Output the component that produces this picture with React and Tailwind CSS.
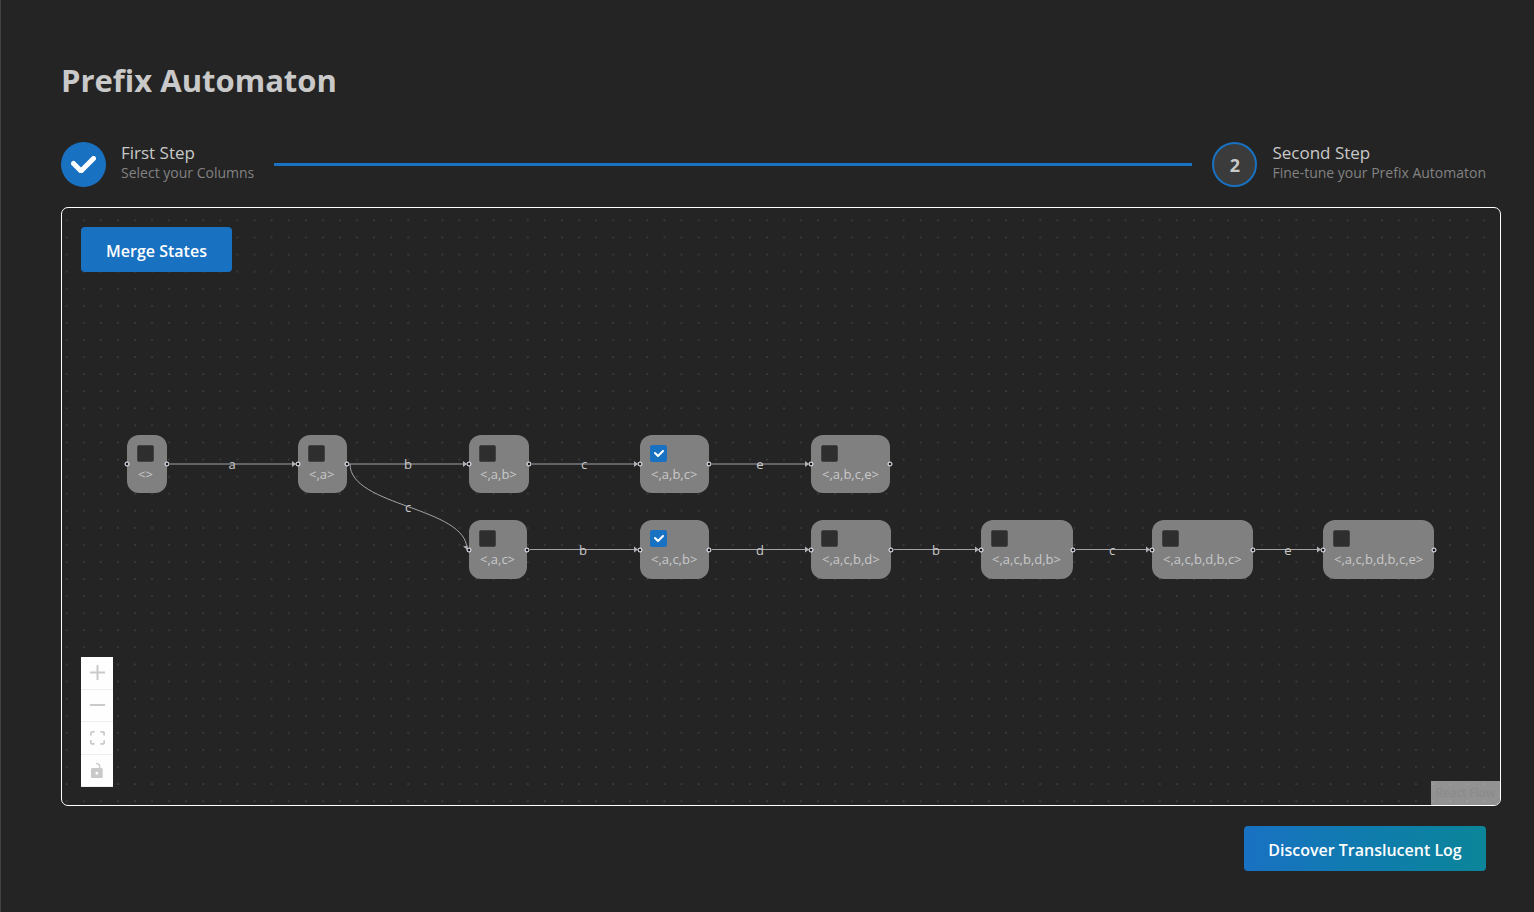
import React, { useState } from "react";

const ROW_1 = { top: 435, height: 58, mid: 464 };
const ROW_2 = { top: 520, height: 59, mid: 549.5 };
const ORIGIN = { x: 62, y: 208 };

const NODES = [
  { label: "<>", x: 127, w: 40, row: ROW_1 },
  { label: "<,a>", x: 298, w: 49, row: ROW_1 },
  { label: "<,a,b>", x: 469, w: 60, row: ROW_1 },
  { label: "<,a,b,c>", x: 640, w: 69, row: ROW_1, checked: true },
  { label: "<,a,b,c,e>", x: 811, w: 79, row: ROW_1 },
  { label: "<,a,c>", x: 469, w: 58, row: ROW_2 },
  { label: "<,a,c,b>", x: 640, w: 69, row: ROW_2, checked: true },
  { label: "<,a,c,b,d>", x: 811, w: 80, row: ROW_2 },
  { label: "<,a,c,b,d,b>", x: 981, w: 92, row: ROW_2 },
  { label: "<,a,c,b,d,b,c>", x: 1152, w: 101, row: ROW_2 },
  { label: "<,a,c,b,d,b,c,e>", x: 1323, w: 111, row: ROW_2 },
];

const EDGES = [
  { from: 0, to: 1, label: "a" },
  { from: 1, to: 2, label: "b" },
  { from: 2, to: 3, label: "c" },
  { from: 3, to: 4, label: "e" },
  { from: 1, to: 5, label: "c" },
  { from: 5, to: 6, label: "b" },
  { from: 6, to: 7, label: "d" },
  { from: 7, to: 8, label: "b" },
  { from: 8, to: 9, label: "c" },
  { from: 9, to: 10, label: "e" },
];

function geometry(edge) {
  const a = NODES[edge.from];
  const b = NODES[edge.to];
  const x1 = a.x + a.w + 3 - ORIGIN.x;
  const x2 = b.x - 3 - ORIGIN.x;
  const y1 = a.row.mid - ORIGIN.y;
  const y2 = b.row.mid - ORIGIN.y;
  return { x1, x2, y1, y2, cx: (x1 + x2) / 2, cy: (y1 + y2) / 2 };
}

function Edges() {
  return (
    <svg className="absolute inset-0 h-full w-full" aria-hidden="true">
      <defs>
        <pattern id="dots" x="-3.9" y="3.8" width="17.08" height="17.08" patternUnits="userSpaceOnUse">
          <circle cx="8.54" cy="8.54" r="0.56" fill="#81818a" />
        </pattern>
      </defs>
      <rect width="100%" height="100%" fill="url(#dots)" />
      {EDGES.map((edge) => {
        const { x1, x2, y1, y2, cy } = geometry(edge);
        const d =
          y1 === y2
            ? `M${x1} ${y1}H${x2}`
            : `M${x1} ${y1}C${x1} ${cy} ${x2 + 1} ${cy} ${x2 + 1} ${y2}`;
        return (
          <g key={`${edge.from}-${edge.to}`}>
            <path d={d} fill="none" stroke="#b1b1b7" strokeWidth="0.9" />
            {y1 === y2 ? (
              <path d={`M${x2 - 3} ${y2 - 3}L${x2 + 1} ${y2}L${x2 - 3} ${y2 + 3}Z`} fill="#b1b1b7" />
            ) : (
              <path d={`M${x2 - 3} ${y2 - 3}L${x2 + 1} ${y2}L${x2 + 2} ${y2 - 4}Z`} fill="#b1b1b7" />
            )}
          </g>
        );
      })}
    </svg>
  );
}

function Handle({ x, y }) {
  return (
    <span
      className="absolute size-[5px] -translate-x-1/2 -translate-y-1/2 rounded-full border border-white bg-[#1a192b]"
      style={{ left: x, top: y }}
    />
  );
}

function StateNode({ node }) {
  const [checked, setChecked] = useState(Boolean(node.checked));
  const left = node.x - ORIGIN.x;
  const top = node.row.top - ORIGIN.y;
  return (
    <>
      <label
        className="absolute flex flex-col rounded-xl bg-[#808080] px-[10px] pt-[10px] text-[13px] leading-5 text-[#c9c9c9]"
        style={{ left, top, width: node.w, height: node.row.height }}
      >
        <span className="grid size-[17px] shrink-0">
          <input
            type="checkbox"
            checked={checked}
            onChange={(e) => setChecked(e.target.checked)}
            className="col-start-1 row-start-1 size-[17px] appearance-none rounded-xs border border-[#424242] bg-[#2e2e2e] checked:border-[#1971c2] checked:bg-[#1971c2]"
          />
          {checked && (
            <svg viewBox="0 0 10 7" className="pointer-events-none col-start-1 row-start-1 w-[10px] place-self-center" aria-hidden="true">
              <path
                d="M4 4.586L1.707 2.293A1 1 0 1 0 .293 3.707l3 3a.997.997 0 0 0 1.414 0l5-5A1 1 0 1 0 8.293.293L4 4.586z"
                fill="#fff"
              />
            </svg>
          )}
        </span>
        <span className="mt-[2px] pl-px whitespace-nowrap">{node.label}</span>
      </label>
      <Handle x={left} y={node.row.mid - ORIGIN.y} />
      <Handle x={left + node.w} y={node.row.mid - ORIGIN.y} />
    </>
  );
}

const CONTROLS = [
  {
    name: "zoom in",
    box: "0 0 32 32",
    size: "w-[15px]",
    d: "M32 18.133H18.133V32h-4.266V18.133H0v-4.266h13.867V0h4.266v13.867H32z",
  },
  { name: "zoom out", box: "0 0 32 5", size: "w-[15px]", d: "M0 0h32v4.2H0z" },
  {
    name: "fit view",
    box: "0 0 32 30",
    size: "w-[15px]",
    d: "M3.692 4.63c0-.53.4-.938.939-.938h5.215V0H4.708C2.13 0 0 2.054 0 4.63v5.216h3.692V4.631zM27.354 0h-5.2v3.692h5.17c.53 0 .984.4.984.939v5.215H32V4.631A4.624 4.624 0 0027.354 0zm.954 24.83c0 .532-.4.94-.939.94h-5.215v3.768h5.215c2.577 0 4.631-2.13 4.631-4.707v-5.139h-3.692v5.139zm-23.677.94c-.531 0-.939-.4-.939-.94v-5.138H0v5.139c0 2.577 2.13 4.707 4.708 4.707h5.138V25.77H4.631z",
  },
  {
    name: "toggle interactivity",
    box: "0 0 25 32",
    size: "w-3",
    d: "M21.333 10.667H19.81V7.619C19.81 3.429 16.38 0 12.19 0c-4.114 1.828-1.37 2.133.305 2.438 1.676.305 4.42 2.59 4.42 5.181v3.048H3.047A3.056 3.056 0 000 13.714v15.238A3.056 3.056 0 003.048 32h18.285a3.056 3.056 0 003.048-3.048V13.714a3.056 3.056 0 00-3.048-3.047zM12.19 24.533a3.056 3.056 0 01-3.047-3.047 3.056 3.056 0 013.047-3.048 3.056 3.056 0 013.048 3.048 3.056 3.056 0 01-3.048 3.047z",
  },
];

function Step({ icon, title, text, active }) {
  return (
    <button type="button" className="flex items-center gap-[15px] text-left">
      <span
        className={
          active
            ? "grid size-[45px] place-items-center rounded-full border-2 border-[#1971c2] bg-[#3b3b3b] text-lg leading-5 font-bold text-[#c9c9c9]"
            : "grid size-[45px] place-items-center rounded-full bg-[#1971c2] text-white"
        }
      >
        {icon}
      </span>
      <span className="flex flex-col pb-1 whitespace-nowrap">
        <span className="text-[17px] leading-[21px] text-[#c9c9c9]">{title}</span>
        <span className="text-[14px] leading-5 text-[#828282]">{text}</span>
      </span>
    </button>
  );
}

export default function App() {
  return (
    <main className="flex min-h-screen flex-col border-l border-[#424242] bg-[#242424] pt-[57px] pr-[33px] pb-[41px] pl-[60px] font-['Open_Sans',sans-serif]">
      <h1 className="text-[31px] leading-[46px] font-bold text-[#c9c9c9]">Prefix Automaton</h1>

      <nav className="mt-[39px] flex items-center gap-5 pr-[15px]" aria-label="Steps">
        <Step
          title="First Step"
          text="Select your Columns"
          icon={
            <svg viewBox="0 0 10 7" className="w-[25px]" aria-hidden="true">
              <path
                d="M4 4.586L1.707 2.293A1 1 0 1 0 .293 3.707l3 3a.997.997 0 0 0 1.414 0l5-5A1 1 0 1 0 8.293.293L4 4.586z"
                fill="currentColor"
              />
            </svg>
          }
        />
        <div className="h-[3px] flex-1 bg-[#1971c2]" />
        <Step active title="Second Step" text="Fine-tune your Prefix Automaton" icon="2" />
      </nav>

      <section className="relative mt-5 min-h-[599px] flex-1 overflow-hidden rounded-[7px] border border-white" aria-label="Automaton">
        <Edges />
        {NODES.map((node) => (
          <StateNode key={node.label} node={node} />
        ))}
        {EDGES.map((edge) => {
          const { cx, cy } = geometry(edge);
          return (
            <span
              key={`${edge.from}-${edge.to}`}
              className="absolute -translate-x-1/2 -translate-y-1/2 text-[13px] leading-4 text-[#c9c9c9]"
              style={{ left: Math.floor(cx), top: Math.round(cy) }}
            >
              {edge.label}
            </span>
          );
        })}

        <button
          type="button"
          className="absolute top-[19px] left-[19px] h-[45px] w-[151px] rounded bg-[#1971c2] pt-0.5 text-[16px] font-semibold text-white"
        >
          Merge States
        </button>

        <div className="absolute bottom-[18px] left-[19px] flex h-[130px] w-8 flex-col bg-[#fefefe]">
          {CONTROLS.map((c) => (
            <button
              key={c.name}
              type="button"
              aria-label={c.name}
              className="grid flex-1 place-items-center border-b border-[#eeeeee] text-[#c9c9c9]"
            >
              <svg viewBox={c.box} className={c.size} fill="currentColor">
                <path d={c.d} />
              </svg>
            </button>
          ))}
        </div>

        <a
          href="#attribution"
          className="absolute right-0 bottom-0 flex h-6 w-[69px] items-center justify-center bg-white/50 text-[12px] text-[#8a8a8a]"
        >
          React Flow
        </a>
      </section>

      <div className="mt-5 flex justify-end pr-[15px]">
        <button
          type="button"
          className="h-[45px] w-[242px] rounded bg-linear-to-r from-[#1971c2] to-[#0c8599] pt-0.5 text-[16px] font-semibold text-white"
        >
          Discover Translucent Log
        </button>
      </div>
    </main>
  );
}
